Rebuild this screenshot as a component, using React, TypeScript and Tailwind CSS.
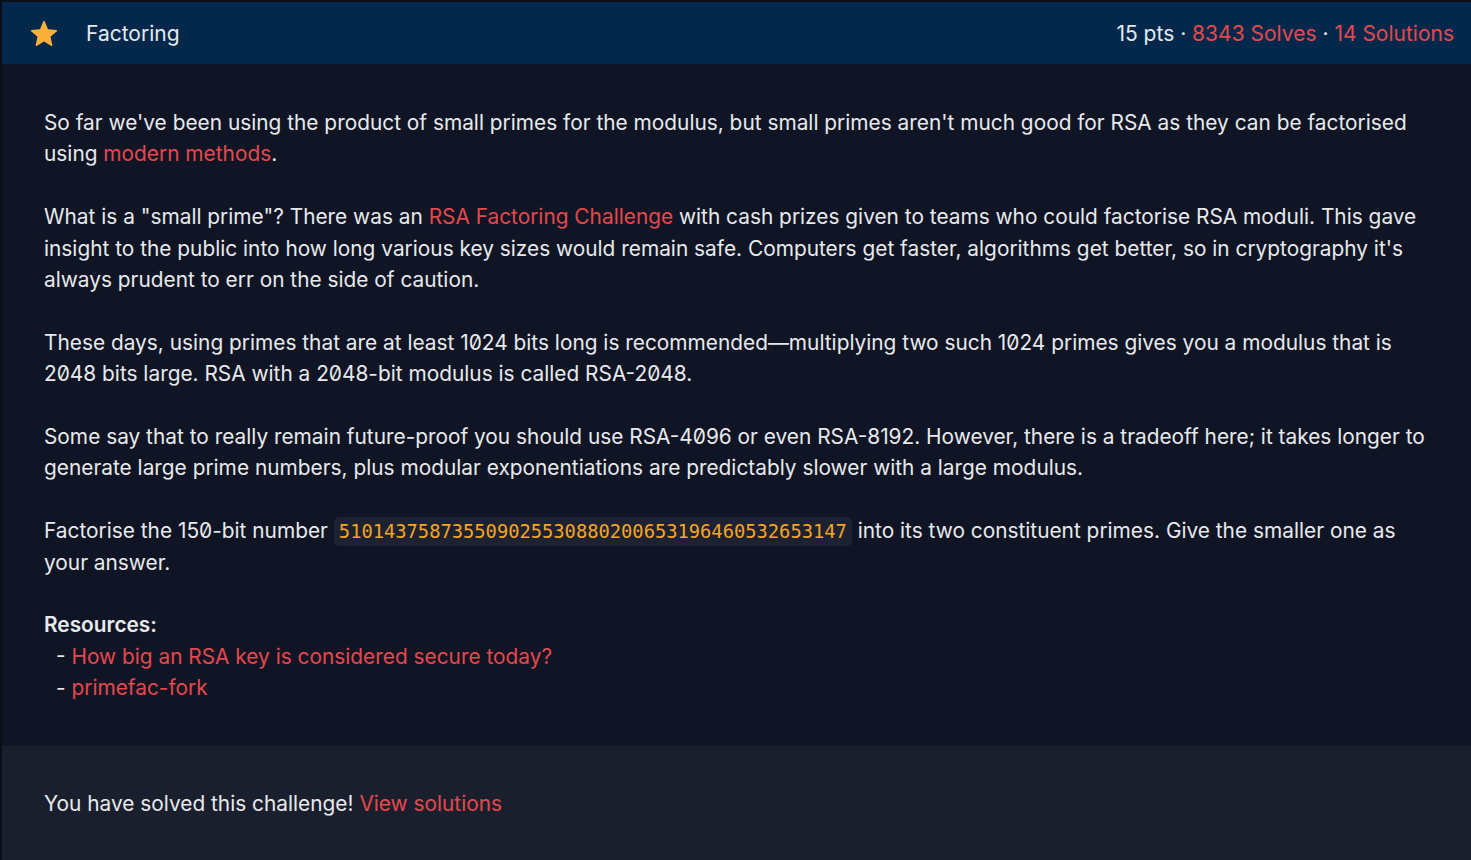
import React from 'react';

const Star: React.FC = () => (
  <svg width="34" height="34" viewBox="0 0 24 24" fill="#fbb03b" aria-hidden="true">
    <path d="M12 17.27l5.18 3.12c.38.23.85-.11.75-.54l-1.37-5.89 4.57-3.960c.34-.29.16-.85-.29-.88l-6.02-.52-2.36-5.55c-.17-.41-.75-.41-.92 0L9.18 8.6l-6.02.52c-.45.04-.63.6-.29.88l4.57 3.96-1.37 5.89c-.1.43.37.77.75.54L12 17.27z" />
  </svg>
);

const A: React.FC<{ children: React.ReactNode }> = ({ children }) => (
  <a href="#" className="text-[#e5484d] hover:underline">{children}</a>
);

const App: React.FC = () => {
  return (
    <div className="flex min-h-[860px] flex-col bg-[#0f1524] font-['Inter','Liberation_Sans',sans-serif] [font-feature-settings:'zero'] text-[#e8e9ec]">
      <div className="flex flex-1 flex-col border-l-2 border-t-2 border-[#0a0e17]">
        {/* Header */}
        <div className="flex h-[62px] items-center bg-[#03284b] pl-[25px] pr-[17px] pt-[1px]">
          <Star />
          <h1 className="ml-[25px] text-[21px] text-[#e6e8ec]">Factoring</h1>
          <div className="ml-auto text-[21px]">
            <span className="text-[#e6e8ec]">15 pts</span>
            <span> · </span>
            <span className="text-[#e5484d]">8343 Solves</span>
            <span> · </span>
            <span className="text-[#e5484d]">14 Solutions</span>
          </div>
        </div>

        {/* Description */}
        <div className="space-y-[31.4px] pl-[42px] pr-[34px] pb-[42px] pt-[43px] text-[20.85px] leading-[31.4px]">
          <p>
            So far we've been using the product of small primes for the modulus, but small primes aren't much good for RSA as they can be factorised using <A>modern methods</A>.
          </p>
          <p>
            What is a "small prime"? There was an <A>RSA Factoring Challenge</A> with cash prizes given to teams who could factorise RSA moduli. This gave insight to the public into how long various key sizes would remain safe. Computers get faster, algorithms get better, so in cryptography it's always prudent to err on the side of caution.
          </p>
          <p>
            These days, using primes that are at least 1024 bits long is recommended—multiplying two such 1024 primes gives you a modulus that is 2048 bits large. RSA with a 2048-bit modulus is called RSA-2048.
          </p>
          <p>
            Some say that to really remain future-proof you should use RSA-4096 or even RSA-8192. However, there is a tradeoff here; it takes longer to generate large prime numbers, plus modular exponentiations are predictably slower with a large modulus.
          </p>
          <p>
            Factorise the 150-bit number{' '}
            <code className="rounded-[5px] bg-[#1c2231] px-[5px] py-[4px] font-['DejaVu_Sans_Mono',monospace] text-[18.75px] leading-none text-[#f5a524]">
              510143758735509025530880200653196460532653147
            </code>{' '}
            into its two constituent primes. Give the smaller one as your answer.
          </p>
          <div>
            <p className="font-semibold">Resources:</p>
            <p className="pl-[12px]">- <A>How big an RSA key is considered secure today?</A></p>
            <p className="pl-[12px]">- <A>primefac-fork</A></p>
          </div>
        </div>

        {/* Footer */}
        <div className="flex-1 bg-[#1a1f2e] px-[42px] pt-[42px] text-[20.85px] leading-[31.4px]">
          <p>
            You have solved this challenge! <A>View solutions</A>
          </p>
        </div>
      </div>
    </div>
  );
};

export default App;
